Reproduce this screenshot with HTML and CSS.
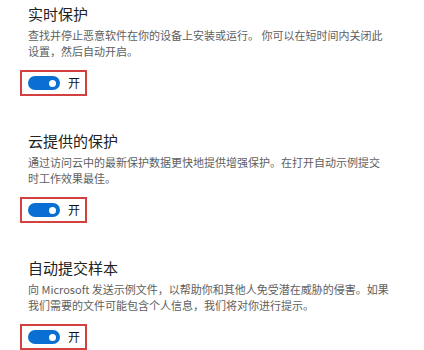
FILE: index.html
```html
<!DOCTYPE html>
<html lang="zh-CN">
<head>
<meta charset="utf-8">
<link rel="stylesheet" href="styles.css">
</head>
<body>
<main class="page">
  <section class="setting">
    <h2 class="title">实时保护</h2>
    <p class="desc">查找并停止恶意软件在你的设备上安装或运行。 你可以在短时间内关闭此设置，然后自动开启。</p>
    <div class="toggle-box">
      <span class="toggle"><span class="knob"></span></span>
      <span class="state">开</span>
    </div>
  </section>
  <section class="setting">
    <h2 class="title">云提供的保护</h2>
    <p class="desc">通过访问云中的最新保护数据更快地提供增强保护。在打开自动示例提交时工作效果最佳。</p>
    <div class="toggle-box">
      <span class="toggle"><span class="knob"></span></span>
      <span class="state">开</span>
    </div>
  </section>
  <section class="setting">
    <h2 class="title">自动提交样本</h2>
    <p class="desc">向 Microsoft 发送示例文件，以帮助你和其他人免受潜在威胁的侵害。如果我们需要的文件可能包含个人信息，我们将对你进行提示。</p>
    <div class="toggle-box">
      <span class="toggle"><span class="knob"></span></span>
      <span class="state">开</span>
    </div>
  </section>
</main>
</body>
</html>
```

FILE: styles.css
```css
html, body {
  margin: 0;
  padding: 0;
  background: #ffffff;
}
body {
  font-family: "Noto Sans CJK SC", "Noto Sans", sans-serif;
  overflow: hidden;
}
.page {
  padding: 4px 0 0 28px;
  display: flex;
  flex-direction: column;
  gap: 35px;
}
.setting {
  display: flex;
  flex-direction: column;
  align-items: flex-start;
}
.title {
  margin: 0;
  font-size: 15px;
  line-height: 20px;
  font-weight: 400;
  color: #222222;
}
.desc {
  margin: 3px 0 0 0;
  width: 362px;
  font-size: 11px;
  line-height: 16px;
  color: #606060;
}
.toggle-box {
  margin: 11px 0 0 -8px;
  height: 22px;
  padding: 0 5px 0 6px;
  border: 2px solid #d3403f;
  display: flex;
  align-items: center;
  gap: 8px;
}
.toggle {
  width: 32px;
  height: 14px;
  border-radius: 7px;
  background: #0a6fd3;
  display: flex;
  align-items: center;
  justify-content: flex-end;
  padding-right: 4px;
  box-sizing: border-box;
}
.knob {
  width: 7px;
  height: 7px;
  border-radius: 50%;
  background: #ffffff;
}
.state {
  font-size: 12px;
  line-height: 16px;
  color: #111111;
}
```
